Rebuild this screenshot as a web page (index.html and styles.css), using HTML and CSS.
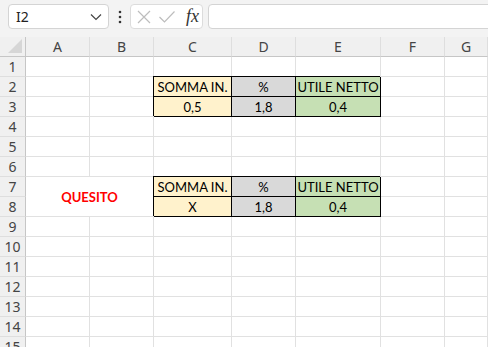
FILE: index.html
```html
<!DOCTYPE html>
<html lang="it">
<head>
    <meta charset="UTF-8">
    <title>Foglio1</title>
    <link rel="stylesheet" href="styles.css">
</head>
<body>
    <div class="toolbar">
        <div class="namebox">
            <span>I2</span>
            <svg width="12" height="8" viewBox="0 0 12 8"><path d="M1 1.5 L6 6.5 L11 1.5" fill="none" stroke="#444" stroke-width="1.2"/></svg>
        </div>
        <div class="more">
            <svg width="4" height="14" viewBox="0 0 4 14"><circle cx="2" cy="2" r="1.3" fill="#333"/><circle cx="2" cy="7" r="1.3" fill="#333"/><circle cx="2" cy="12" r="1.3" fill="#333"/></svg>
        </div>
        <div class="fxbtns">
            <svg width="16" height="16" viewBox="0 0 16 16"><path d="M2 2 L14 14 M14 2 L2 14" stroke="#bdbdbd" stroke-width="1.2"/></svg>
            <svg width="18" height="16" viewBox="0 0 18 16"><path d="M1.5 8 L6.5 13 L16.5 2.5" fill="none" stroke="#bdbdbd" stroke-width="1.2"/></svg>
            <span class="fx">fx</span>
        </div>
        <div class="formula"></div>
    </div>

    <div class="sheet">
        <div class="corner"><svg width="14" height="14" viewBox="0 0 14 14"><path d="M14 0 L14 14 L0 14 Z" fill="#d6d6d6"/></svg></div>
        <div class="ch">A</div><div class="ch">B</div><div class="ch">C</div><div class="ch">D</div><div class="ch">E</div><div class="ch">F</div><div class="ch">G</div>

        <div class="rh">1</div><div class="c"></div><div class="c"></div><div class="c"></div><div class="c"></div><div class="c"></div><div class="c"></div><div class="c"></div>
        <div class="rh">2</div><div class="c"></div><div class="c"></div><div class="c bx y">SOMMA IN.</div><div class="c bx g">%</div><div class="c bx v">UTILE NETTO</div><div class="c"></div><div class="c"></div>
        <div class="rh">3</div><div class="c"></div><div class="c"></div><div class="c bx y">0,5</div><div class="c bx g">1,8</div><div class="c bx v">0,4</div><div class="c"></div><div class="c"></div>
        <div class="rh">4</div><div class="c"></div><div class="c"></div><div class="c"></div><div class="c"></div><div class="c"></div><div class="c"></div><div class="c"></div>
        <div class="rh">5</div><div class="c"></div><div class="c"></div><div class="c"></div><div class="c"></div><div class="c"></div><div class="c"></div><div class="c"></div>
        <div class="rh">6</div><div class="c"></div><div class="c"></div><div class="c"></div><div class="c"></div><div class="c"></div><div class="c"></div><div class="c"></div>
        <div class="rh">7</div><div class="c quesito">QUESITO</div><div class="c bx y">SOMMA IN.</div><div class="c bx g">%</div><div class="c bx v">UTILE NETTO</div><div class="c"></div><div class="c"></div>
        <div class="rh">8</div><div class="c bx y">X</div><div class="c bx g">1,8</div><div class="c bx v">0,4</div><div class="c"></div><div class="c"></div>
        <div class="rh">9</div><div class="c"></div><div class="c"></div><div class="c"></div><div class="c"></div><div class="c"></div><div class="c"></div><div class="c"></div>
        <div class="rh">10</div><div class="c"></div><div class="c"></div><div class="c"></div><div class="c"></div><div class="c"></div><div class="c"></div><div class="c"></div>
        <div class="rh">11</div><div class="c"></div><div class="c"></div><div class="c"></div><div class="c"></div><div class="c"></div><div class="c"></div><div class="c"></div>
        <div class="rh">12</div><div class="c"></div><div class="c"></div><div class="c"></div><div class="c"></div><div class="c"></div><div class="c"></div><div class="c"></div>
        <div class="rh">13</div><div class="c"></div><div class="c"></div><div class="c"></div><div class="c"></div><div class="c"></div><div class="c"></div><div class="c"></div>
        <div class="rh">14</div><div class="c"></div><div class="c"></div><div class="c"></div><div class="c"></div><div class="c"></div><div class="c"></div><div class="c"></div>
        <div class="rh">15</div><div class="c"></div><div class="c"></div><div class="c"></div><div class="c"></div><div class="c"></div><div class="c"></div><div class="c"></div>
    </div>
</body>
</html>
```

FILE: styles.css
```css
* {
    box-sizing: border-box;
}
body {
    margin: 0;
    width: 488px;
    height: 347px;
    overflow: hidden;
    background-color: white;
    font-family: "Noto Sans", sans-serif;
}

/* barra della formula */
.toolbar {
    display: flex;
    align-items: flex-start;
    height: 37px;
    padding: 4px 0 0 8px;
    background-color: #f3f3f3;
}
.namebox {
    display: flex;
    align-items: center;
    justify-content: space-between;
    width: 101px;
    height: 25px;
    padding: 0 6px 0 7px;
    background-color: white;
    border: 1px solid #d4d4d4;
    border-radius: 4px;
    font-size: 14px;
    color: #222;
}
.more {
    display: flex;
    align-items: center;
    justify-content: center;
    width: 21px;
    height: 25px;
}
.fxbtns {
    display: flex;
    align-items: center;
    gap: 6px;
    width: 73px;
    height: 25px;
    padding-left: 5px;
    background-color: white;
    border: 1px solid #dcdcdc;
    border-radius: 4px;
}
.fx {
    margin-left: 4px;
    font-family: "Liberation Serif", serif;
    font-style: italic;
    font-size: 18px;
    color: #333;
}
.formula {
    flex: 1;
    height: 25px;
    margin-left: 5px;
    margin-right: -10px;
    background-color: white;
    border: 1px solid #d4d4d4;
    border-radius: 4px;
}

/* foglio */
.sheet {
    display: grid;
    grid-template-columns: 26px 64px 64px 78px 64px 85px 64px 1fr;
    grid-auto-rows: 20px;
}
.corner, .ch, .rh {
    background-color: #f0f0f0;
    color: #444;
    font-size: 14px;
    display: flex;
    align-items: center;
    justify-content: center;
}
.corner {
    align-items: flex-end;
    justify-content: flex-end;
    padding: 0 3px 3px 0;
    border-right: 1px solid #c6c6c6;
    border-bottom: 1px solid #c6c6c6;
}
.ch {
    border-right: 1px solid #dedede;
    border-bottom: 1px solid #c6c6c6;
}
.rh {
    border-right: 1px solid #c6c6c6;
    border-bottom: 1px solid #dedede;
}
.c {
    display: flex;
    align-items: center;
    justify-content: center;
    border-right: 1px solid #e1e1e1;
    border-bottom: 1px solid #e1e1e1;
    font-family: "Lato", sans-serif;
    font-size: 13px;
    color: black;
    white-space: nowrap;
}
.bx {
    border-right-color: black;
    border-bottom-color: black;
    box-shadow: -1px -1px 0 black;
}
.y {
    background-color: #fff2cc;
}
.g {
    background-color: #d9d9d9;
}
.v {
    background-color: #c6e0b4;
}
.quesito {
    grid-column: span 2;
    grid-row: span 2;
    color: #ff0000;
    font-weight: bold;
}
```
